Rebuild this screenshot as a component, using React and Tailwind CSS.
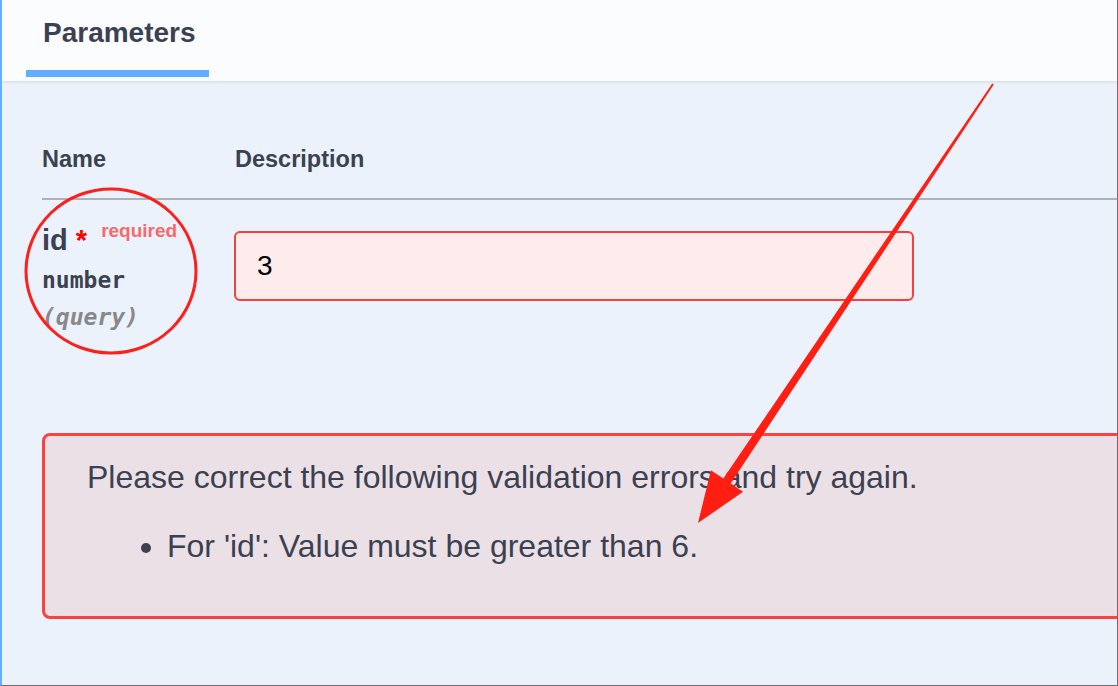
import React from 'react';

const sans = { fontFamily: '"Liberation Sans", Arial, sans-serif' };
const mono = { fontFamily: '"DejaVu Sans Mono", monospace' };

function Annotations() {
  return (
    <svg
      className="absolute inset-0 pointer-events-none"
      width="1118"
      height="686"
      viewBox="0 0 1118 686"
    >
      <ellipse cx="111" cy="271" rx="85" ry="82" fill="none" stroke="#ff1f1a" strokeWidth="3" />
      <polygon
        fill="#ff1f12"
        points="992.2,83.4 993.8,84.6 730.7,483.5 743.1,491.8 698,523 710.9,470.2 723.3,478.5"
      />
    </svg>
  );
}

export default function App() {
  return (
    <div className="relative w-[1118px] h-[686px] overflow-hidden" style={sans}>
      <div className="h-full overflow-hidden bg-[#ebf2fb] border-l-2 border-l-[#61affe] border-r border-r-[#6e6e6e] border-b border-b-[#6e6e6e] text-[#3b4151]">
        {/* Tab header */}
        <div className="relative z-10 h-[81px] bg-[#fbfcfe] shadow-[0_1px_3px_rgba(0,0,0,0.10)]">
          <div className="ml-[24px] w-[183px] flex flex-col">
            <div className="pt-[19px] pl-[17px] text-[28px] leading-[28px] font-bold">Parameters</div>
            <div className="mt-[23px] h-[7px] bg-[#61affe]"></div>
          </div>
        </div>

        {/* Parameter table */}
        <div className="pl-[40px]">
          <div className="flex pt-[67px] pb-[27px] text-[23.5px] leading-[23px] font-bold">
            <div className="w-[193px]">Name</div>
            <div>Description</div>
          </div>
          <div className="h-[2px] bg-[#adb1b9]"></div>

          <div className="flex pt-[22px]">
            <div className="w-[192px]">
              <div className="h-[36px] overflow-visible text-[29px] leading-[36px] font-bold whitespace-nowrap">
                id&nbsp;<span className="text-[#ff0000]">*</span>
                <span className="relative -top-[13px] ml-[14px] text-[19px] leading-none text-[#f76a6c]">required</span>
              </div>
              <div className="mt-[4px] text-[23px] leading-[37px] font-bold" style={mono}>
                number
              </div>
              <div className="text-[23px] leading-[37px] font-bold italic text-[#888888]" style={mono}>
                (query)
              </div>
            </div>
            <div className="pt-[9px]">
              <input
                readOnly
                value="3"
                className="w-[680px] h-[70px] border-2 border-[#f93e3e] rounded-[6px] bg-[#feebeb] pl-[21px] text-[28px] text-black outline-none"
              />
            </div>
          </div>

          {/* Validation errors */}
          <div className="mt-[97px] w-[1100px] border-[3px] border-[#fd4141] rounded-[8px] bg-[#ece0e7] pt-[21px] pb-[50px] pl-[42px] text-[32px] leading-[40px]">
            <div>Please correct the following validation errors and try again.</div>
            <ul className="mt-[29px] list-disc pl-[80px]">
              <li>For 'id': Value must be greater than 6.</li>
            </ul>
          </div>
        </div>
      </div>
      <Annotations />
    </div>
  );
}
